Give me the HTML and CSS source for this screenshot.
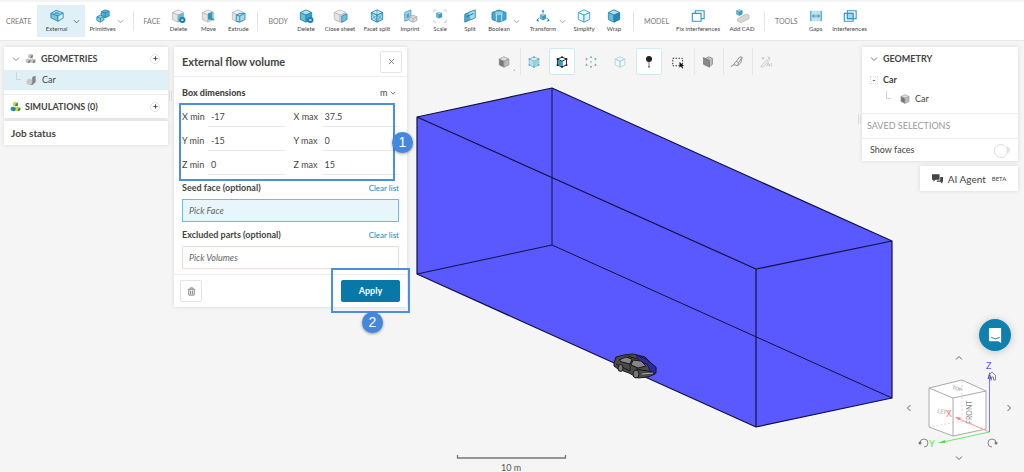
FILE: index.html
```html
<!DOCTYPE html>
<html lang="en">
<head>
<meta charset="utf-8">
<title>External flow volume</title>
<meta name="viewport" content="width=device-width, initial-scale=1">
<link rel="stylesheet" href="styles.css">
</head>
<body>
<svg class="defs" aria-hidden="true">
  <symbol id="cube" viewBox="0 0 16 16"><path class="c-top" d="M8 1 14.5 4 8 7 1.500 4z"/><path class="c-left" d="M1.500 4 8 7v8L1.500 12z"/><path class="c-right" d="M14.500 4 8 7v8l6.500-3z"/></symbol>
  <symbol id="chev" viewBox="0 0 8 8"><path d="M1 2.500 4 5.500 7 2.500" fill="none" stroke="currentColor"/></symbol>
  <symbol id="plus" viewBox="0 0 8 8"><path d="M4 1.500v5M1.500 4h5" fill="none" stroke="currentColor"/></symbol>
  <symbol id="parts" viewBox="0 0 16 16"><path class="p1" d="M8 1l3.500 1.500v4L8 8 4.500 6.500v-4z"/><path class="p2" d="M4.500 8 8 9.500v4L4.500 15 1 13.500v-4z"/><path class="p3" d="M11.500 8 15 9.500v4L11.500 15 8 13.500v-4z"/><path class="p4" d="M8 4.500l3.500-2v4L8 8zM4.500 11.500l3.500-2v4L4.500 15zM11.500 11.500l3.500-2v4L11.500 15z"/></symbol>
  <symbol id="nodes" viewBox="0 0 16 16"><g fill="currentColor"><circle cx="8" cy="1.500" r="1.300"/><circle cx="2" cy="4" r="1.300"/><circle cx="14" cy="4" r="1.300"/><circle cx="2" cy="12" r="1.300"/><circle cx="14" cy="12" r="1.300"/><circle cx="8" cy="14.500" r="1.300"/></g></symbol>
</svg>

<header class="toolbar">
  <span class="group-name">CREATE</span>
  <div class="split-tool active">
    <button class="tool"><svg viewBox="0 0 16 16"><path d="M1 5 7 1.500l8 3L9 8z" fill="#b9e0ef" stroke="#2589b4"/><path d="M1 5 9 8v6L1 10z" fill="#7cc3df" stroke="#2589b4"/><path d="M15 4.500 9 8v6l6-3.500z" fill="#d8edf5" stroke="#2589b4"/><path d="M4 5 7 3l5 2-3 1.500z" fill="#4ea9cd"/></svg><span>External</span></button>
    <button class="more" aria-label="More external tools"><svg><use href="#chev"/></svg></button>
  </div>
  <div class="split-tool primitives">
    <button class="tool"><svg viewBox="0 0 16 16" stroke="#2589b4"><path d="M6 3 10.500 1 15 2.500V8l-4.500 2L6 8z" fill="#54b0d3"/><path d="m6 3 4.500 1.500L15 2.500M10.500 4.500V10" fill="none"/><path d="M1 9l4-2 4 1.500v4L5 15l-4-2z" fill="#93d0e7"/><path d="m1 9 4 1.500 4-2M5 10.500V15" fill="none"/></svg><span>Primitives</span></button>
    <button class="more" aria-label="More primitives"><svg><use href="#chev"/></svg></button>
  </div>

  <span class="group-name ruled">FACE</span>
  <button class="tool"><svg viewBox="0 0 16 16" class="pale"><use href="#cube"/><path d="M14.500 4 8 7v8l6.500-3z" fill="#67b8d8"/><circle cx="13" cy="12.500" r="3.500" fill="#1679a8"/><path d="m11.700 11.200 2.600 2.600m0-2.600-2.600 2.600" stroke="#fff"/></svg><span>Delete</span></button>
  <button class="tool"><svg viewBox="0 0 16 16" class="pale"><use href="#cube"/><path d="M8 5l5-2v7l3 3-8-1z" fill="#2d98c4"/></svg><span>Move</span></button>
  <button class="tool"><svg viewBox="0 0 16 16" class="pale"><use href="#cube"/><path d="M6 7l4-2 6 0v7l-6 3-4-1z" fill="#a9d9eb" stroke="#2589b4"/><path d="M6 7l4 1 6-3M10 8v7" fill="none" stroke="#2589b4"/></svg><span>Extrude</span></button>

  <span class="group-name ruled">BODY</span>
  <button class="tool"><svg viewBox="0 0 16 16"><use href="#cube"/><circle cx="13" cy="12.500" r="3.500" fill="#1679a8"/><path d="m11.700 11.200 2.600 2.600m0-2.600-2.600 2.600" stroke="#fff"/></svg><span>Delete</span></button>
  <button class="tool wide"><svg viewBox="0 0 16 16" class="pale"><use href="#cube"/><path d="M10 8 16 5.500V12l-6 3.500z" fill="#6ec0de" stroke="#2589b4"/></svg><span>Close sheet</span></button>
  <button class="tool mid"><svg viewBox="0 0 16 16" class="light"><use href="#cube"/><path d="M1.500 4 8 15 14.500 4M1.500 12 8 7l6.500 5M8 1v6" fill="none" stroke="#2d91bc" stroke-width=".7"/></svg><span>Facet split</span></button>
  <button class="tool"><svg viewBox="0 0 16 16"><path d="M2 4 9 1v10l-7 3z" fill="#a7d8ea" stroke="#3c9cc3"/><path d="M4 6 7 4.500v5L4 11z" fill="#46a6cd"/><path d="M7 9l4.500-2L16 9v4l-4.500 2L7 13z" fill="#ddd" stroke="#aaa"/><path d="m7 9 4.500 2L16 9m-4.500 2v4" fill="none" stroke="#aaa"/></svg><span>Imprint</span></button>
  <button class="tool"><svg viewBox="0 0 16 16"><svg x="3" y="3" width="10" height="10" viewBox="0 0 16 16"><use href="#cube"/></svg><path d="M1 4V1h3M12 1h3v3M15 12v3h-3M4 15H1v-3" fill="none" stroke="#a6d3e4"/></svg><span>Scale</span></button>
  <button class="tool"><svg viewBox="0 0 16 16"><path d="M2 6 9 3v9l-7 3z" fill="#4da9ce" stroke="#2589b4"/><path d="M6 4l8-3v9l-5 2.500" fill="#a7d8ea" stroke="#2589b4"/><path d="M4 9l8-4" stroke="#126d98"/></svg><span>Split</span></button>
  <div class="split-tool boolean">
    <button class="tool"><svg viewBox="0 0 16 16"><path d="M0 4 8 1l8 3v8l-8 3-8-3z" fill="#45a5cc" stroke="#2589b4"/><path d="M4 3h8v4H4z" fill="#8fcee5"/><path d="M5 6v8M11 6v8" stroke="#d7eef6"/></svg><span>Boolean</span></button>
    <button class="more" aria-label="More boolean tools"><svg><use href="#chev"/></svg></button>
  </div>
  <div class="split-tool transform">
    <button class="tool"><svg viewBox="0 0 16 16"><path d="M8 1v4M4 10l-3 3M12 10l3 3" stroke="#2589b4"/><path d="m6.500 3 1.500-2 1.500 2zM1 11v3h3zM15 11v3h-3z" fill="#2589b4"/><svg x="4" y="5" width="8" height="8" viewBox="0 0 16 16"><use href="#cube"/></svg></svg><span>Transform</span></button>
    <button class="more" aria-label="More transforms"><svg><use href="#chev"/></svg></button>
  </div>
  <button class="tool"><svg viewBox="0 0 16 16" class="outline"><use href="#cube"/></svg><span>Simplify</span></button>
  <button class="tool"><svg viewBox="0 0 16 16"><use href="#cube"/><path d="M8 7l6.500-3v8L8 15z" fill="#2787b2"/></svg><span>Wrap</span></button>

  <span class="group-name ruled">MODEL</span>
  <button class="tool fix"><svg viewBox="0 0 16 16" fill="none" stroke="#3498c2" stroke-width="1.300"><path d="M5 5V2h10v9h-3M1.500 5h10v9h-10z"/></svg><span>Fix interferences</span></button>
  <button class="tool mid"><svg viewBox="0 0 16 16"><path d="m3 11 9-5 4 1v4l-9 4.500L3 14z" fill="#d7d7d7" stroke="#bbb"/><svg x="1" y="0" width="10" height="10" viewBox="0 0 16 16"><use href="#cube"/></svg></svg><span>Add CAD</span></button>

  <span class="group-name ruled">TOOLS</span>
  <button class="tool"><svg viewBox="0 0 16 16"><path d="M2 2h12v12H2z" fill="#bfe2ef"/><path d="M2 2v12M14 2v12M4 8h8M6 6 4 8l2 2M10 6l2 2-2 2" stroke="#2589b4" fill="none"/></svg><span>Gaps</span></button>
  <button class="tool wide"><svg viewBox="0 0 16 16" stroke="#3498c2" stroke-width="1.300"><path d="M5 2h10v9H5zM1.500 5h10v9h-10z" fill="none"/><path d="M5 5h6.500v6H5z" fill="#a6d8ea"/></svg><span>Interferences</span></button>
</header>

<main class="workspace">
  <svg class="scene" viewBox="0 41 1024 431" role="img" aria-label="Flow volume around car">
    <path d="M417 117 552 88 892 241V398L756 427 417 274z" fill="#5959ff"/>
    <g fill="none" stroke="#111144" stroke-linejoin="round">
      <path d="M552 88V245M417 274 552 245 892 398"/>
      <path d="M417 117 552 88 892 241V398L756 427 417 274zM417 117 756 269 892 241M756 269V427" stroke-width="1.200"/>
    </g>
    <g stroke="#171717" stroke-width="1" stroke-linejoin="round">
      <path d="M614 363l2-6 8-2 9-1 12 3 6 6 5 5-1 6-7 3-10 1-9-5-11-4-4-3z" fill="#4a4a4a"/>
      <path d="M636 355l10 4 10 8 0 6-5 0-4-9-8-3z" fill="#2c2c94" stroke="#171750"/>
      <path d="m619 360 7-3 6 2-2 5-8-2zM633 360l8 1 5 5-8 2-7-3z" fill="#868686"/>
      <path d="M616 364l14 7M636 369l17 3M628 356l9 3M630 364v7" fill="none"/>
      <ellipse cx="620.500" cy="368" rx="2.500" ry="3.500" fill="#777"/>
      <ellipse cx="636" cy="374" rx="3" ry="4" fill="#777"/>
      <path d="m642 374 11-1" stroke="#aaa"/>
    </g>
    <path d="M457.500 455v3h108v-3" fill="none" stroke="#777" stroke-width="1.300"/>
    <text class="scale-text" x="511" y="471" text-anchor="middle">10 m</text>
  </svg>

  <aside class="tree">
    <div class="card">
      <div class="tree-row">
        <button class="plain" aria-label="Collapse geometries"><svg><use href="#chev"/></svg></button>
        <svg class="parts"><use href="#parts"/></svg><strong>GEOMETRIES</strong>
        <button class="add" aria-label="Add geometry"><svg><use href="#plus"/></svg></button>
      </div>
      <a href="#car" class="tree-row leaf"><i class="branch"></i><svg class="parts" viewBox="0 0 16 16"><path d="M1 7l5-2 3 2v5l-4 3-4-2z" fill="#c8c8c8"/><path d="M9 3l5-2v9l-4 4-4 1 3-3z" fill="#858585"/></svg><span>Car</span></a>
      <div class="tree-row sims">
        <svg class="parts vivid"><use href="#parts"/></svg><strong>SIMULATIONS (0)</strong>
        <button class="add" aria-label="Add simulation"><svg><use href="#plus"/></svg></button>
      </div>
    </div>
    <div class="card job">Job status</div>
    <i class="grip"></i>
  </aside>

  <form class="card dialog">
    <div class="dialog-head"><h1>External flow volume</h1><button type="button" class="square" aria-label="Close"><svg viewBox="0 0 8 8"><path d="m1 1 6 6m0-6L1 7" stroke="currentColor"/></svg></button></div>
    <div class="dialog-body">
      <div class="line"><strong>Box dimensions</strong><span class="unit"><select aria-label="Unit"><option>m</option></select><svg><use href="#chev"/></svg></span></div>
      <div class="dims">
        <label for="x0">X min</label><input id="x0" value="-17"><label for="x1" class="second">X max</label><input id="x1" value="37.5">
        <label for="y0">Y min</label><input id="y0" value="-15"><label for="y1" class="second">Y max</label><input id="y1" value="0">
        <label for="z0">Z min</label><input id="z0" value="0"><label for="z1" class="second">Z max</label><input id="z1" value="15">
        <div class="callout"><b class="badge side">1</b></div>
      </div>
      <div class="line"><label for="seed">Seed face (optional)</label><a href="#seed">Clear list</a></div>
      <input class="pick focus" id="seed" placeholder="Pick Face">
      <div class="line later"><label for="excl">Excluded parts (optional)</label><a href="#excl">Clear list</a></div>
      <input class="pick" id="excl" placeholder="Pick Volumes">
    </div>
    <div class="dialog-foot">
      <button type="button" class="square" aria-label="Delete"><svg viewBox="0 0 10 10" fill="none" stroke="currentColor"><path d="M1 2.500h8M3.500 2V1h3v1M2 3v6h6V3M4 4v4M6 4v4"/></svg></button>
      <div class="apply-wrap"><button type="button" class="apply">Apply</button><div class="callout"><b class="badge below">2</b></div></div>
    </div>
  </form>

  <nav class="view-tools" aria-label="View">
    <button aria-label="Shaded"><svg viewBox="0 0 16 16" class="gray"><use href="#cube"/></svg><i class="corner"></i></button>
    <button class="ruled" aria-label="Volumes"><svg viewBox="0 0 16 16" class="soft"><use href="#cube"/><use href="#nodes"/></svg></button>
    <button class="on" aria-label="Faces"><svg viewBox="0 0 16 16"><path d="M8 1.500 14 4v8l-6 2.500L2 12V4zM2 4l6 3 6-3M8 7v7.500" fill="#fff" stroke="#222" stroke-width="1.300"/><path d="M2.500 5 8 7.500V14l-5.500-2.500z" fill="#26a4da"/><use href="#nodes"/></svg></button>
    <button aria-label="Vertices"><svg viewBox="0 0 16 16" class="dots"><path d="M8 1.500 14 4v8l-6 2.500L2 12V4zM8 8v6" fill="none" stroke="#b8dce5" stroke-dasharray="2 2"/><use href="#nodes"/><circle cx="8" cy="7.500" r="1" fill="currentColor"/></svg></button>
    <button aria-label="Bodies"><svg viewBox="0 0 16 16" class="thin"><use href="#cube"/></svg></button>
    <button class="on" aria-label="Pick"><svg viewBox="0 0 16 16"><circle cx="8" cy="4" r="4" fill="#222"/><path d="M8 7v6" stroke="#444"/><circle cx="8" cy="14.300" r="1.400" fill="#777"/></svg></button>
    <button aria-label="Box select"><svg viewBox="0 0 16 16"><path d="M1 3h13v10H1z" fill="none" stroke="#333" stroke-width="1.300" stroke-dasharray="2 1.800"/><path d="m10 8 6 5-2.500.3L15 16l-1.500.5-1.500-2.700L10 15.500z" fill="#111"/></svg></button>
    <button class="ruled" aria-label="Section"><svg viewBox="0 0 16 16"><path d="M5 3 9 1l5 2v8l-4 3" fill="#bbb" stroke="#888"/><path d="M2 2l8 4v9l-8-4z" fill="#888" stroke="#777"/></svg></button>
    <button class="ruled" aria-label="Measure"><svg viewBox="0 0 16 16"><path d="M0 14 3 12h3l3 1 4-4 2-7-3-1-5 6-4 5M7 7l3 2 4-6M10 9l-1 4" fill="none" stroke="#888" stroke-width="1.200"/></svg></button>
    <button class="ruled" aria-label="AI select"><svg viewBox="0 0 16 16" fill="none" stroke="#bbb"><path d="m1 14 8-9 2 2-7 8zM2 3h4M4 1v4M10 1l4 3M12 1v5M9 14l2-5 2 5m-3-2h3M15 9v5"/></svg></button>
  </nav>

  <aside class="inspect">
    <div class="card">
      <div class="geo-head"><svg><use href="#chev"/></svg><strong>GEOMETRY</strong></div>
      <div class="geo-row"><button class="minus" aria-label="Collapse Car">-</button><strong>Car</strong></div>
      <div class="geo-row child"><i class="branch"></i><svg class="gray" viewBox="0 0 16 16"><use href="#cube"/></svg><span>Car</span></div>
      <div class="saved">SAVED SELECTIONS</div>
      <label class="faces"><span>Show faces</span><input type="checkbox"></label>
    </div>
    <button class="card agent"><svg viewBox="0 0 16 14"><path d="M0 0h11v8H5L2 11V8H0z"/><path d="M12 4h4v7h-1v3l-3-3H7V9h5z"/></svg><span>AI Agent</span><small>BETA</small></button>
    <i class="grip"></i>
  </aside>

  <button class="chat" aria-label="Open chat"><svg viewBox="0 0 16 16"><path d="M2 0h12v16l-3-2H2a1 1 0 0 1-1-1V1a1 1 0 0 1 1-1z" fill="#fff"/><path d="M3.500 10q4.500 3 9 0" fill="none" stroke="#0f7fad"/></svg></button>

  <div class="navcube">
    <button class="up" aria-label="Rotate up"><svg><use href="#chev"/></svg></button>
    <button class="left" aria-label="Rotate left"><svg><use href="#chev"/></svg></button>
    <svg class="axes" viewBox="915 363 88 88" role="img" aria-label="Orientation">
      <path d="M929 387 962 379l24 11v38l-33 7-24-9z" fill="#fff"/>
      <path d="M962 380v40l24 8M962 420l-33 6" fill="none" stroke="#ccc" stroke-dasharray="2 2" stroke-width=".7"/>
      <path d="M929 387 962 379l24 11-33 7zM929 387v39l24 9 33-7v-38M953 397v38" fill="none" stroke="#aaa"/>
      <text transform="translate(972 423) rotate(-90)" font-size="7" fill="#888">FRONT</text>
      <text transform="translate(937 412) rotate(8)" font-size="6" fill="#aaa">LEFT</text>
      <text transform="translate(952 388) rotate(14)" font-size="5" fill="#888">TOP</text>
      <g fill="none"><path d="M989.500 431 957 417" stroke="#ff9c9c"/><path d="M989.500 431 943 441" stroke="#68ec68"/><path d="M989.500 431v-56" stroke="#7777ff"/></g>
      <path d="M955 416l6 .5-2 3z" fill="#ff8080"/><path d="m938 442 7-3 .5 3z" fill="#43e643"/><path d="m987.500 378 2-7 2 7z" fill="#5050ff"/>
      <g font-size="9"><text x="986" y="368" fill="#5959ff">Z</text><text x="929" y="446" fill="#43e643">Y</text><text x="946" y="416" fill="#ff8080">X</text></g>
      <g fill="none" stroke="#888"><path d="m988 375 4-4 4 4M989.500 375v4h2v-3h2v3h2v-4M920 442a4 4 0 1 1 4 4M996 442a4 4 0 1 0-4 4"/></g>
      <circle cx="920" cy="442" r="1.500" fill="#777"/><circle cx="996" cy="442" r="1.500" fill="#777"/>
    </svg>
    <button class="right" aria-label="Rotate right"><svg><use href="#chev"/></svg></button>
    <button class="down" aria-label="Rotate down"><svg><use href="#chev"/></svg></button>
  </div>
</main>
</body>
</html>
```

FILE: styles.css
```css
* { box-sizing: border-box; }
body { margin: 0; min-height: 100vh; display: flex; flex-direction: column; background: #f5f5f5; color: #444; font: 9px/12px Lato, sans-serif; }
button, input, select { font: inherit; color: inherit; margin: 0; padding: 0; border: 0; background: none; }
button { cursor: pointer; display: flex; align-items: center; justify-content: center; }
a { color: #1d84b5; text-decoration: none; }
h1 { margin: 0; font-size: 11px; line-height: 14px; }
svg { display: block; flex: none; width: 8px; height: 8px; overflow: visible; }
.defs { position: absolute; width: 0; height: 0; }
.card { background: #fff; box-shadow: 0 0 4px rgba(0, 0, 0, .12); }

.c-top { fill: var(--top, #b5dfee); stroke: var(--edge, #2589b4); }
.c-left { fill: var(--lt, #6bbad9); stroke: var(--edge, #2589b4); }
.c-right { fill: var(--rt, #389fc9); stroke: var(--edge, #2589b4); }
.pale { --top: #eee; --lt: #e4e4e4; --rt: #ddd; --edge: #bbb; }
.light { --top: #cde9f3; --lt: #b9e0ef; --rt: #a5d6ea; }
.outline { --top: #f2fafd; --lt: #e9f6fb; --rt: #dff1f8; --edge: #3c9fc8; }
.gray { --top: #ddd; --lt: #777; --rt: #bbb; --edge: #999; }
.soft { --top: #cfeaf2; --lt: #b5dfec; --rt: #9dd3e3; --edge: #87bfd0; color: #75a9b9; }
.thin { --top: none; --lt: none; --rt: none; --edge: #a3d1df; }
.dots { color: #8aa8b1; }

.toolbar { display: flex; align-items: center; height: 41px; padding: 2px 6px 2px; background: #fff; border-top: 2px solid #f4f4f4; border-bottom: 1px solid #e8e8e8; white-space: nowrap; position: relative; z-index: 1; }
.group-name { font-size: 7px; color: #777; margin-right: 5px; }
.ruled { border-left: 1px solid #e6e6e6; }
.group-name.ruled { padding-left: 10px; line-height: 20px; margin: 0 3px 0 4px; }
.tool { width: 30px; height: 32px; flex-direction: column; gap: 2px; font-size: 6px; line-height: 8px; }
.tool > svg { width: 14px; height: 14px; }
.tool.mid { width: 36px; }
.tool.wide { width: 38px; }
.tool.fix { width: 52px; }
.split-tool { display: flex; padding: 0 4px; }
.split-tool .tool { width: 32px; }
.split-tool .more { width: 8px; color: #999; }
.primitives .tool, .boolean .tool { width: 28px; }
.split-tool.boolean { padding: 0 4px 0 0; }
.split-tool.transform { padding: 0 2px; }
.more svg { width: 7px; height: 7px; }
.active { background: #dff0f6; }
.active .more { color: #666; }

.workspace { position: relative; flex: 1; display: flex; align-items: flex-start; gap: 6px; padding: 6px 6px 0 4px; }
.scene { position: absolute; inset: 0; width: 100%; height: 100%; }
.scale-text { font-size: 9px; fill: #555; }
.workspace > aside, .dialog, .view-tools { position: relative; }

.tree { width: 164px; display: grid; gap: 3px; }
.tree-row { display: flex; align-items: center; height: 23px; padding: 0 8px; gap: 5px; color: inherit; }
.parts { width: 11px; height: 11px; }
.p1 { fill: var(--a, #c4c4c4); }
.p2 { fill: var(--b, #c4c4c4); }
.p3 { fill: var(--a, #c4c4c4); }
.p4 { fill: var(--c, #858585); }
.vivid { --a: #d0d62a; --b: #2b8fb8; --c: #2f7f77; }
.plain { color: #888; }
.add { width: 10px; height: 10px; margin-left: auto; border: 1px solid #e2e2e2; border-radius: 50%; }
.add svg { width: 7px; height: 7px; }
.leaf { height: 20px; background: #dff0f6; }
.branch { width: 5px; height: 8px; margin: -8px 5px 0 4px; border: solid #d5d5d5; border-width: 0 0 1px 1px; }
.leaf .branch { margin-right: 0; }
.sims { height: 24px; margin-top: 4px; border-top: 1px solid #eee; padding-left: 6px; gap: 4px; }
.sims .add { margin-right: 0; }
.job { padding: 6px 7px; font-size: 10px; font-weight: bold; }
.grip { position: absolute; right: -4px; top: 44px; width: 3px; height: 10px; border: solid #ddd; border-width: 0 1px; }

.dialog { width: 233px; }
.dialog-head, .dialog-foot, .line { display: flex; align-items: center; justify-content: space-between; }
.dialog-head { height: 30px; padding: 0 5px 0 8px; border-bottom: 1px solid #eee; }
.square { width: 22px; height: 22px; border: 1px solid #e4e4e4; border-radius: 2px; color: #777; }
.square svg { width: 7px; height: 7px; }
.dialog-foot .square svg { width: 9px; height: 9px; }
.dialog-body { padding: 10px 8px 5px; }
.line { font-weight: bold; }
.line a { font-size: 8px; font-weight: normal; }
.line.later { margin-top: 7px; }
.unit { display: flex; align-items: center; gap: 2px; padding-right: 3px; font-weight: normal; }
.unit select { appearance: none; line-height: 12px; }
.unit svg { width: 6px; height: 6px; }
.dims { position: relative; display: grid; grid-template-columns: 26px 1fr 36px 1fr; grid-auto-rows: 20px; row-gap: 4px; margin: 8px 0 7px; align-items: center; }
.dims input { min-width: 0; width: 100%; height: 20px; padding-left: 3px; border-bottom: 1px solid #e8e8e8; }
.dims .second { padding-left: 8px; }
.callout { position: absolute; border: 2px solid #4a8fe4; pointer-events: none; }
.dims .callout { inset: -4px 4px -6px -3px; }
.badge { position: absolute; width: 21px; height: 21px; border-radius: 50%; background: #4488dd; color: #fff; font: 14px/21px "Liberation Sans", sans-serif; text-align: center; box-shadow: 0 1px 3px rgba(0, 0, 0, .4); }
.side { right: -20px; top: 27px; }
.below { left: 29px; top: 42px; }
.pick { display: block; width: 100%; height: 23px; margin-top: 5px; padding: 0 6px; border: 1px solid #f6dada; font-style: italic; }
.pick::placeholder { color: #666; opacity: 1; }
.focus { background: #e8f6fc; border-color: #5cc4e8; }
.dialog-foot { height: 33px; padding: 0 7px 0 6px; border-top: 1px solid #eee; }
.apply-wrap { position: relative; }
.apply { width: 59px; height: 22px; border-radius: 2px; background: #0878a8; color: #fff; font-weight: bold; }
.apply-wrap .callout { inset: -12px -10px -11px; }

.view-tools { display: flex; gap: 3px; margin: 1px auto 0; }
.view-tools button { position: relative; width: 26px; height: 27px; }
.view-tools svg { width: 12px; height: 12px; }
.view-tools .on { background: #fff; border: 1px solid #ccebf4; border-radius: 2px; color: #222; }
.corner { position: absolute; right: 2px; bottom: 4px; border: 1px solid #bbb; border-left-color: transparent; border-top-color: transparent; }

.inspect { width: 156px; display: grid; gap: 5px; justify-items: end; }
.inspect > .card:first-child { width: 100%; }
.geo-head, .geo-row { display: flex; align-items: center; gap: 5px; padding: 0 8px; }
.geo-head { height: 24px; }
.geo-head svg { color: #777; }
.geo-row { height: 18px; }
.child { height: 20px; padding-left: 20px; margin-bottom: 4px; }
.child .branch { margin-right: 4px; }
.geo-row .gray { width: 10px; height: 10px; }
.minus { width: 8px; height: 8px; border: 1px dotted #ddd; }
.saved { padding: 6px 5px; border: solid #eee; border-width: 1px 0; color: #999; }
.faces { display: flex; justify-content: space-between; align-items: center; height: 22px; padding: 0 8px; }
.faces input { appearance: none; position: relative; width: 16px; height: 6px; border-radius: 3px; background: #e4e4e4; }
.faces input::before { content: ""; position: absolute; left: 0; top: -3px; width: 12px; height: 12px; border: 1px solid #ddd; border-radius: 50%; background: #fff; }
.agent { width: 98px; height: 25px; gap: 5px; font-size: 10px; }
.agent svg { width: 11px; height: 10px; fill: #444; }
.agent small { font-size: 6px; margin-left: 1px; }
.inspect .grip { left: -4px; top: 67px; }

.chat { position: absolute; right: 13px; bottom: 121px; width: 32px; height: 32px; border-radius: 50%; background: #0f7fad; box-shadow: 0 1px 8px rgba(0, 0, 0, .2); }
.chat svg { width: 15px; height: 15px; }
.navcube { position: absolute; right: 9px; bottom: 8px; display: grid; grid-template: 12px 88px 12px / 12px 88px 12px; color: #666; }
.navcube .axes { width: 88px; height: 88px; grid-area: 2 / 2; }
.up { grid-area: 1 / 2; }
.left { grid-area: 2 / 1; }
.right { grid-area: 2 / 3; }
.down { grid-area: 3 / 2; }
.up svg { rotate: 180deg; }
.left svg { rotate: 90deg; }
.right svg { rotate: -90deg; }
```
